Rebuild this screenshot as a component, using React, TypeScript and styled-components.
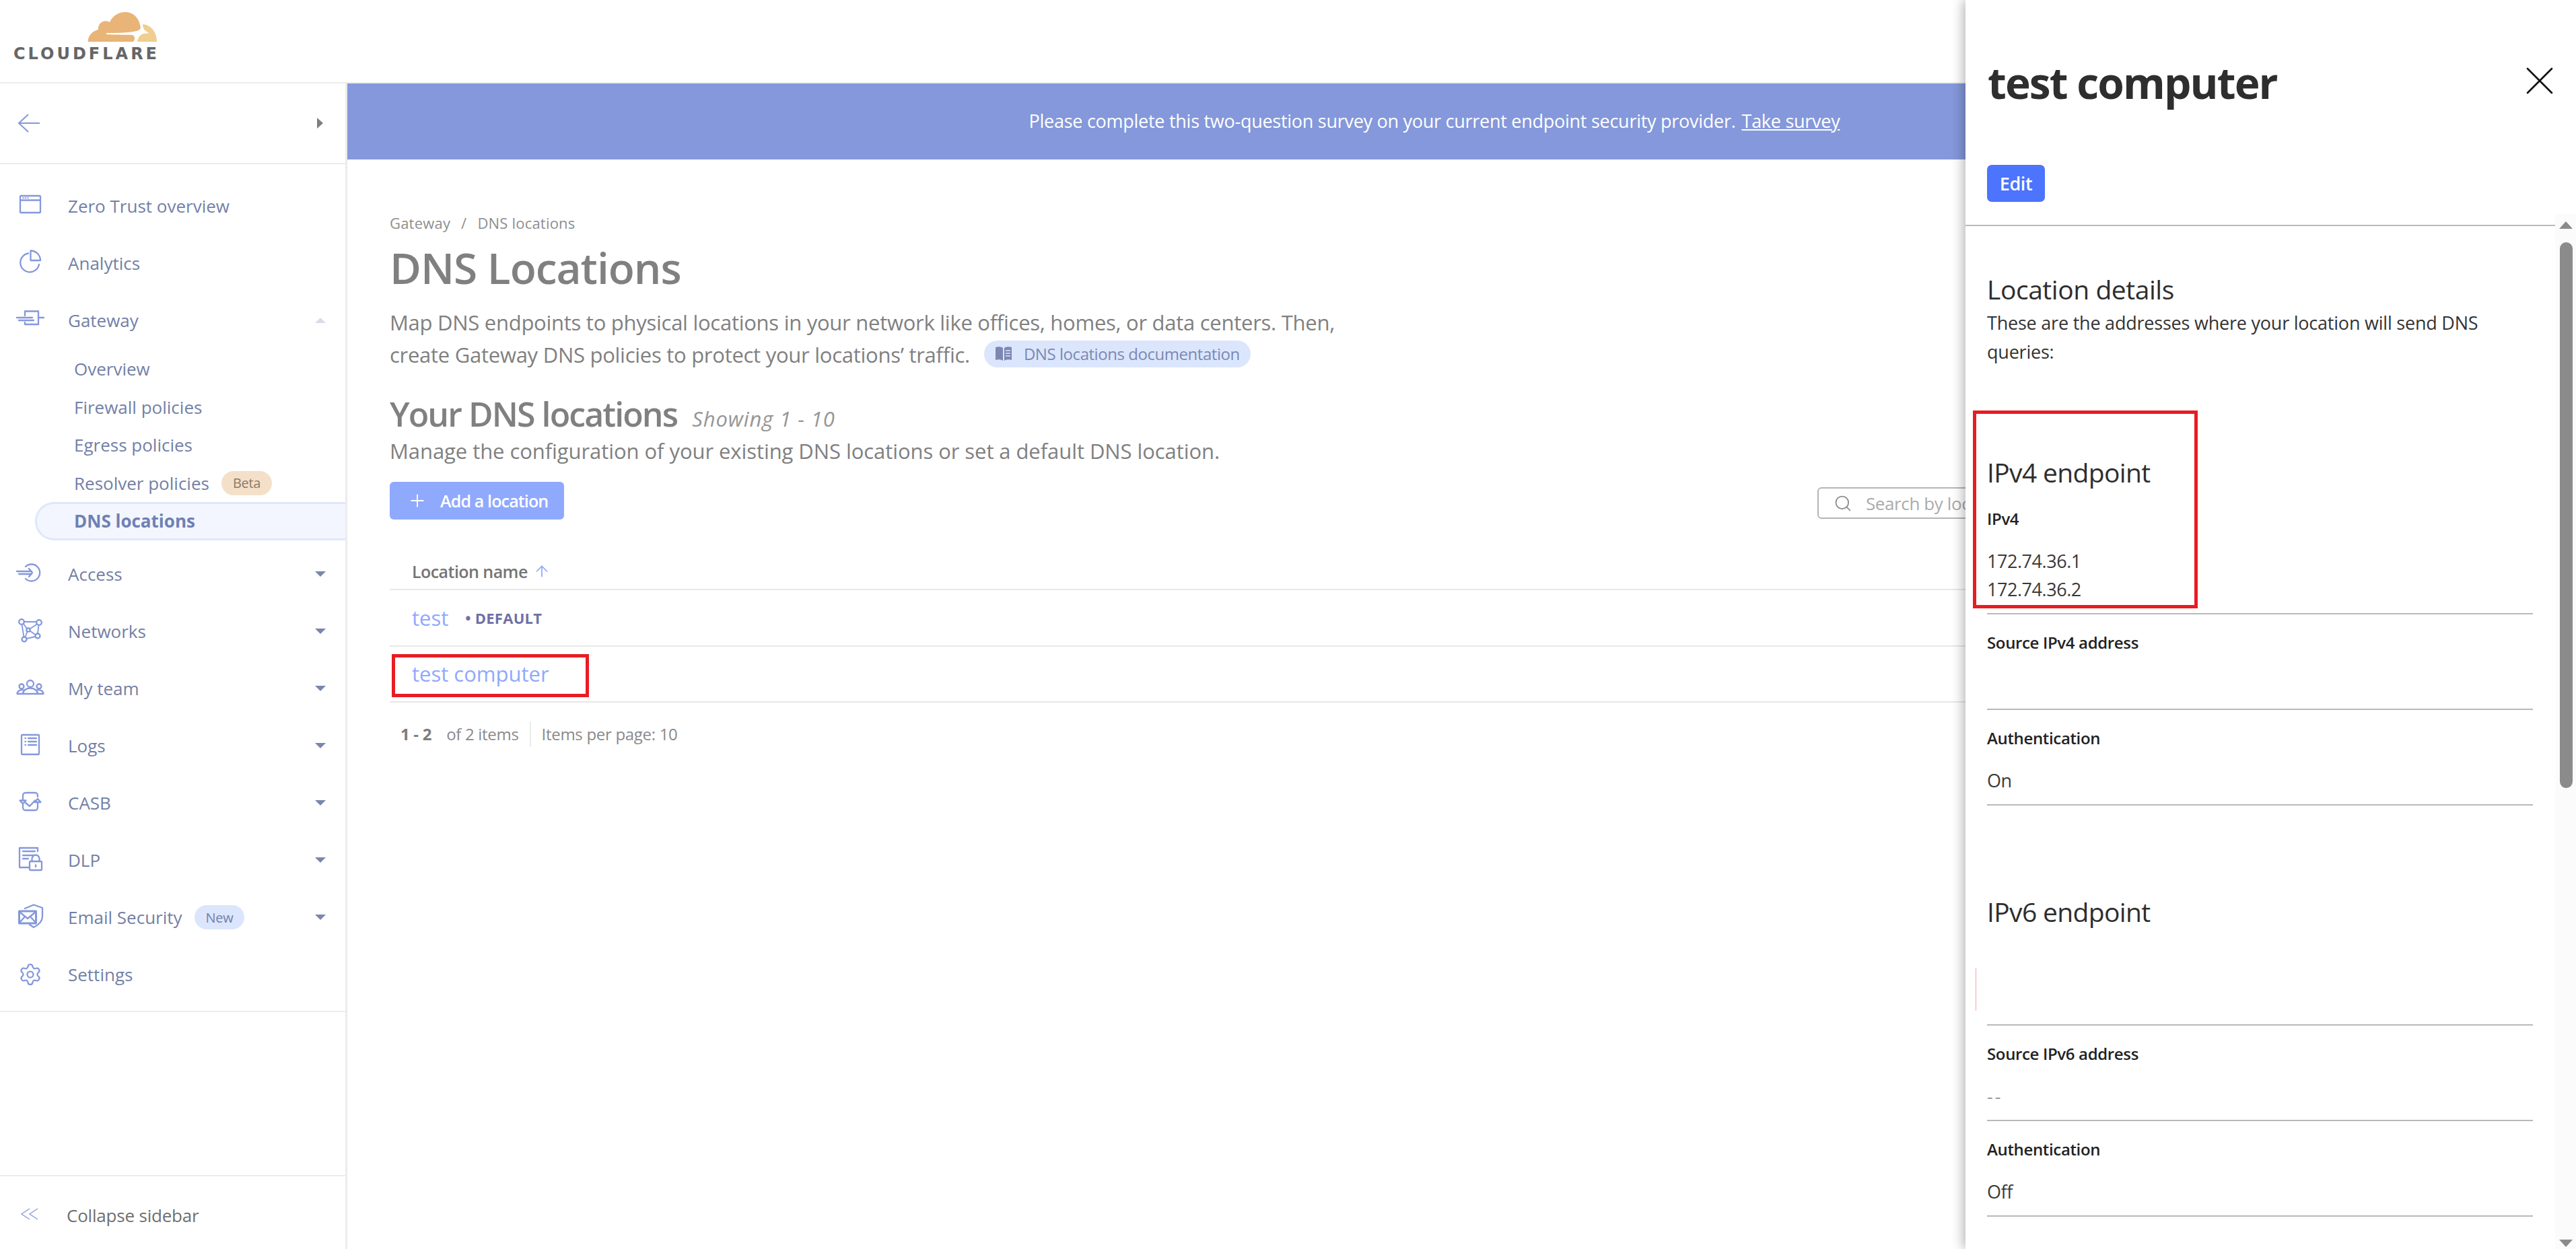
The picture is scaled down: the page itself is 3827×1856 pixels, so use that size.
import React from 'react';
import styled, { createGlobalStyle } from 'styled-components';
import { ArrowUp, Plus, Search, Settings, X } from 'lucide-react';

const GlobalStyle = createGlobalStyle`
    html, body {
        margin: 0;
        padding: 0;
        background: #fff;
        font-family: 'Open Sans', 'Noto Sans', sans-serif;
    }
    * {
        box-sizing: border-box;
    }
`;

const Page = styled.div`
    position: relative;
    width: 3827px;
    height: 1856px;
    overflow: hidden;
    display: flex;
    flex-direction: column;
    background: #fff;
`;

const TopBar = styled.header`
    height: 124px;
    flex: none;
    border-bottom: 2px solid #ececec;
    padding: 15px 0 0 20px;
`;

const LogoWrap = styled.div`
    display: flex;
    flex-direction: column;
    align-items: flex-end;
    width: 214px;
`;

const LogoText = styled.div`
    font-family: 'DejaVu Sans', sans-serif;
    font-weight: 700;
    font-size: 24px;
    line-height: 20px;
    letter-spacing: 4px;
    margin-top: 7px;
    width: 214px;
    white-space: nowrap;
    color: #666667;
`;

const Body = styled.div`
    flex: 1;
    display: flex;
    min-height: 0;
`;

const Sidebar = styled.aside`
    width: 516px;
    flex: none;
    display: flex;
    flex-direction: column;
    border-right: 3px solid #ececec;
`;

const BackRow = styled.div`
    height: 120px;
    flex: none;
    display: flex;
    align-items: center;
    justify-content: space-between;
    padding: 0 33px 0 26px;
    border-bottom: 2px solid #ececec;
`;

const SideTriangle = styled.span`
    width: 0;
    height: 0;
    border-top: 8px solid transparent;
    border-bottom: 8px solid transparent;
    border-left: 9px solid #7f7f7f;
`;

const Nav = styled.nav`
    padding: 19px 0 11px;
    border-bottom: 2px solid #ececec;
`;

const NavRow = styled.div`
    height: 85px;
    display: flex;
    align-items: center;
    padding: 0 29px 0 23px;
`;

const IconSlot = styled.span`
    width: 44px;
    height: 44px;
    flex: none;
    display: flex;
    align-items: center;
    justify-content: center;
    margin-right: 34px;
    color: #8498db;
`;

const NavLabel = styled.span`
    font-size: 26px;
    letter-spacing: 0;
    color: #737fa6;
    white-space: nowrap;
`;

const Caret = styled.span<{ $open?: boolean }>`
    width: 0;
    height: 0;
    margin-left: auto;
    border-left: 8.5px solid transparent;
    border-right: 8.5px solid transparent;
    ${({ $open }) =>
        $open ? 'border-bottom: 8px solid #d8dde9;' : 'border-top: 8px solid #7a86ad;'}
`;

const SubList = styled.div`
    padding: 2px 0 8px;
`;

const SubRow = styled.div<{ $active?: boolean }>`
    height: 56.5px;
    display: flex;
    align-items: center;
    padding-left: 110px;
    font-size: 26px;
    letter-spacing: 0;
    white-space: nowrap;
    color: #737fa6;
    ${({ $active }) =>
        $active &&
        `
        margin-left: 52px;
        padding-left: 55px;
        font-weight: 700;
        color: #6f80b3;
        background: #f3f6fe;
        border: 3px solid #dfe7fb;
        border-right: none;
        border-radius: 28px 0 0 28px;
    `}
`;

const Tag = styled.span<{ $bg: string; $fg: string }>`
    height: 36px;
    padding: 0 17px;
    margin-left: 18px;
    border-radius: 18px;
    display: inline-flex;
    align-items: center;
    font-size: 20px;
    letter-spacing: -0.3px;
    background: ${({ $bg }) => $bg};
    color: ${({ $fg }) => $fg};
`;

const NavFooter = styled.div`
    margin-top: auto;
    height: 110px;
    flex: none;
    border-top: 2px solid #ececec;
    display: flex;
    align-items: center;
    padding: 8px 0 0 23px;
    color: #8f9fdf;
`;

const FooterLabel = styled.span`
    font-size: 26px;
    letter-spacing: -0.2px;
    color: #6f6f6f;
    margin-left: 32px;
`;

const Main = styled.main`
    flex: 1;
    min-width: 0;
    display: flex;
    flex-direction: column;
`;

const Banner = styled.div`
    height: 113px;
    flex: none;
    display: flex;
    align-items: center;
    justify-content: center;
    padding: 0 81px 3px 0;
    background: #8498db;
    color: #fff;
    font-size: 27px;
    letter-spacing: -0.27px;
    white-space: nowrap;
    a {
        color: #fff;
        text-decoration: underline;
        margin-left: 9px;
    }
`;

const Content = styled.div`
    padding: 79px 427px 0 63px;
`;

const Crumbs = styled.div`
    display: flex;
    font-size: 22px;
    line-height: 30px;
    letter-spacing: 0.2px;
    color: #8e8e8e;
`;

const CrumbSep = styled.span`
    margin: 0 16px;
`;

const Title = styled.h1`
    margin: 14px 0 0;
    font-size: 64px;
    line-height: 76px;
    font-weight: 600;
    letter-spacing: -1px;
    color: #808080;
`;

const Lead = styled.p`
    margin: 19px 0 0;
    font-size: 31px;
    line-height: 48px;
    letter-spacing: -0.27px;
    color: #808080;
    white-space: nowrap;
`;

const DocPill = styled.span`
    display: inline-flex;
    align-items: center;
    vertical-align: 1px;
    height: 40px;
    padding: 0 16px;
    margin-left: 21px;
    border-radius: 20px;
    background: #dbe6fd;
    color: #7c88b2;
    font-size: 24px;
    letter-spacing: -0.45px;
    svg {
        margin-right: 17px;
    }
`;

const SectionTitle = styled.div`
    margin-top: 36px;
    display: flex;
    align-items: baseline;
    height: 56px;
`;

const SectionName = styled.h2`
    margin: 0;
    font-size: 50px;
    line-height: 56px;
    font-weight: 600;
    letter-spacing: -1.9px;
    color: #808080;
`;

const Showing = styled.span`
    margin-left: 22px;
    font-size: 31px;
    font-style: italic;
    letter-spacing: 0.9px;
    color: #969696;
`;

const SubLead = styled.p`
    margin: 5px 0 0;
    font-size: 31px;
    line-height: 44px;
    letter-spacing: -0.07px;
    color: #808080;
`;

const Toolbar = styled.div`
    margin-top: 24px;
    display: flex;
    align-items: flex-start;
`;

const AddButton = styled.div`
    width: 259px;
    height: 56px;
    border-radius: 6px;
    background: #8fa9fd;
    color: #fff;
    display: flex;
    align-items: center;
    padding-left: 26px;
    gap: 19px;
    font-size: 25px;
    font-weight: 600;
    letter-spacing: -0.85px;
    white-space: nowrap;
`;

const SearchBox = styled.div`
    margin: 8px 0 0 auto;
    width: 700px;
    height: 47px;
    border: 2px solid #b5b5b5;
    border-radius: 6px;
    display: flex;
    align-items: center;
    padding-left: 22px;
    gap: 20px;
    font-size: 26px;
    letter-spacing: -0.4px;
    color: #ababab;
`;

// The drawer covers the rest of the placeholder, so it stops at the drawer's edge.
const SearchText = styled.span`
    width: 148px;
    overflow: hidden;
    white-space: nowrap;
`;

const TableHead = styled.div`
    margin-top: 51px;
    height: 54px;
    padding-left: 33px;
    display: flex;
    align-items: center;
    gap: 8px;
    border-bottom: 2px solid #e7e7e7;
    font-size: 25px;
    font-weight: 600;
    letter-spacing: -0.55px;
    color: #757575;
    svg {
        color: #8fa9fd;
    }
`;

const TableRow = styled.div`
    position: relative;
    height: 83.5px;
    padding-left: 33px;
    display: flex;
    align-items: center;
    border-bottom: 2px solid #e7e7e7;
`;

const RowLink = styled.span`
    font-size: 31px;
    font-weight: 500;
    letter-spacing: 0;
    color: #8fa9fd;
`;

const DefaultMark = styled.span`
    margin-left: 25px;
    font-size: 22px;
    font-weight: 700;
    letter-spacing: 0.25px;
    color: #6f70a6;
`;

const RedFrame = styled.div<{ $left: number; $top: number; $w: number; $h: number }>`
    position: absolute;
    left: ${({ $left }) => $left}px;
    top: ${({ $top }) => $top}px;
    width: ${({ $w }) => $w}px;
    height: ${({ $h }) => $h}px;
    border: 5px solid #e81c24;
    pointer-events: none;
`;

const Pager = styled.div`
    margin-top: 23px;
    height: 47px;
    padding-left: 16px;
    display: flex;
    align-items: center;
    font-size: 24px;
    letter-spacing: -0.3px;
    color: #8a8a8a;
    strong {
        font-weight: 700;
        margin-right: 22px;
        color: #7c7c7c;
    }
`;

const PagerRule = styled.span`
    height: 38px;
    margin: 0 16px;
    border-left: 2px solid #ececec;
`;

const Panel = styled.aside`
    position: absolute;
    top: 0;
    right: 0;
    bottom: 0;
    width: 907px;
    background: #fff;
    box-shadow: -4px 0 16px rgba(0, 0, 0, 0.28);
    display: flex;
    flex-direction: column;
`;

const PanelHead = styled.div`
    position: relative;
    height: 336px;
    flex: none;
    margin-right: 31px;
    padding: 77px 0 0 33px;
    border-bottom: 2px solid #b9b9b9;
`;

const PanelTitle = styled.h2`
    margin: 0;
    font-size: 64px;
    line-height: 92px;
    font-weight: 700;
    letter-spacing: -1.9px;
    color: #2e2e2e;
`;

const CloseIcon = styled.span`
    position: absolute;
    top: 84px;
    right: -13px;
    color: #111;
    display: flex;
`;

const EditButton = styled.div`
    width: 86px;
    height: 55px;
    margin: 76px 0 0 -1px;
    border-radius: 7px;
    background: #4c74fd;
    color: #fff;
    display: flex;
    align-items: center;
    justify-content: center;
    font-size: 27px;
    font-weight: 600;
    letter-spacing: -0.4px;
`;

const PanelBody = styled.div`
    flex: 1;
    min-height: 0;
    overflow: hidden;
    width: 843px;
    padding-left: 32px;
`;

const DetailsTitle = styled.h3`
    margin: 69px 0 0;
    font-size: 39px;
    line-height: 50px;
    font-weight: 500;
    letter-spacing: -0.45px;
    color: #2e2e2e;
`;

const DetailsText = styled.p`
    margin: 3px 0 0;
    width: 760px;
    font-size: 27px;
    line-height: 43px;
    letter-spacing: -0.22px;
    color: #333;
`;

const Endpoint = styled.section<{ $gap: number }>`
    position: relative;
    margin-top: ${({ $gap }) => $gap}px;
`;

const EndpointTitle = styled.h3`
    margin: 0 0 2px;
    font-size: 39px;
    line-height: 50px;
    font-weight: 500;
    letter-spacing: -0.65px;
    color: #2e2e2e;
`;

const Field = styled.div`
    position: relative;
    padding: 27px 0 14px;
    border-bottom: 2px solid #b9b9b9;
`;

const FieldLabel = styled.div`
    min-height: 30px;
    font-size: 24px;
    line-height: 30px;
    font-weight: 600;
    letter-spacing: -0.35px;
    color: #222;
`;

const FieldValue = styled.div`
    min-height: 42px;
    margin-top: 27px;
    font-size: 27px;
    line-height: 42px;
    letter-spacing: -0.45px;
    color: #3a3a3a;
`;

const EmptyValue = styled(FieldValue)`
    letter-spacing: 3px;
    color: #999;
`;

const Caretline = styled.span`
    position: absolute;
    left: -17px;
    top: 57px;
    height: 63px;
    border-left: 1px solid #f6a3ab;
`;

const ScrollTrack = styled.div`
    position: absolute;
    top: 318px;
    right: 0;
    bottom: 0;
    width: 31px;
    background: #fbfbfb;
`;

const ScrollThumb = styled.div`
    position: absolute;
    top: 42px;
    left: 7px;
    width: 19px;
    height: 811px;
    border-radius: 10px;
    background: #8b8b8b;
`;

const ScrollArrow = styled.span<{ $down?: boolean }>`
    position: absolute;
    left: 6px;
    width: 0;
    height: 0;
    border-left: 10.5px solid transparent;
    border-right: 10.5px solid transparent;
    ${({ $down }) =>
        $down
            ? 'bottom: 3px; border-top: 11px solid #8b8b8b;'
            : 'top: 11px; border-bottom: 11px solid #8b8b8b;'}
`;

const Glyph: React.FC<{ children: React.ReactNode }> = ({ children }) => (
    <svg width="44" height="44" viewBox="0 0 44 44" fill="none" stroke="currentColor" strokeWidth="2.3" strokeLinecap="round" strokeLinejoin="round">
        {children}
    </svg>
);

const ICONS: Record<string, React.ReactNode> = {
    overview: (
        <Glyph>
            <rect x="7" y="7" width="30" height="25" rx="1.5" />
            <path d="M7 13.5H37" />
            <path d="M11 10.2h.8M14.5 10.2h.8M18 10.2h.8" strokeWidth="1.8" />
        </Glyph>
    ),
    analytics: (
        <Glyph>
            <path d="M19 7.5A14 14 0 1 0 35 24" />
            <path d="M22.5 3.5V18H37A14.5 14.5 0 0 0 22.5 3.5Z" />
        </Glyph>
    ),
    gateway: (
        <Glyph>
            <path d="M14 15V8.500H34V28H14V25" />
            <path d="M2 18H25M5 22H27M34 18H42" />
        </Glyph>
    ),
    access: (
        <Glyph>
            <path d="M15 11A12.500 12.500 0 1 1 15 29" />
            <path d="M2 18H24M5 22H24M20 14L25 20L20 26" />
        </Glyph>
    ),
    networks: (
        <Glyph>
            <circle cx="9" cy="8" r="3.800" />
            <circle cx="35" cy="9" r="3.800" />
            <circle cx="33" cy="29" r="3.500" />
            <circle cx="13" cy="34" r="3.500" />
            <circle cx="19" cy="20" r="2.700" />
            <path d="M13 8H31M34.500 13L33 25.500M29.500 30L16.500 33M12.500 30.500L9.500 12M11.500 10.500L17 18M21.500 18.500L32 11.500M21.500 21.500L30 27.500M17.500 22.500L14.500 31" strokeWidth="1.800" />
        </Glyph>
    ),
    team: (
        <Glyph>
            <circle cx="22" cy="15" r="5" />
            <circle cx="9" cy="19" r="3.500" />
            <circle cx="35" cy="19" r="3.500" />
            <path d="M3 30H41M11 30A11 8.500 0 0 1 33 30M2.500 30A7 6 0 0 1 13 25M41.500 30A7 6 0 0 0 31 25" />
        </Glyph>
    ),
    logs: (
        <Glyph>
            <rect x="9" y="6" width="26" height="29" rx="1" />
            <path d="M19 11H31M19 16H31M19 21H31M14.500 11h.5M14.500 16h.5M14.500 21h.5" />
        </Glyph>
    ),
    casb: (
        <Glyph>
            <path d="M11 18V11A4 4 0 0 1 15 7H29A4 4 0 0 1 33 11V13M33 21V29A4 4 0 0 1 29 33H15A4 4 0 0 1 11 29V25" />
            <path d="M6.500 18.500H15.500L11 23.500ZM28.500 21L33 16L37.500 21Z" />
            <path d="M15 22L21 27L29 18.500" />
        </Glyph>
    ),
    dlp: (
        <Glyph>
            <path d="M20 33H6V4H33V9" />
            <path d="M11 9H29M11 15H27M11 20H19" />
            <rect x="21" y="24" width="18" height="13" rx="1" />
            <path d="M24.500 24V20A5.500 5.500 0 0 1 35.500 20V24M30 29.500V32" />
        </Glyph>
    ),
    email: (
        <Glyph>
            <path d="M14 9L27 3.500L40 8V21C40 29 33 34 27 37L21 33" />
            <rect x="5.500" y="13" width="25" height="18" fill="#fff" strokeWidth="3" />
            <path d="M6 14L18 24L30 14M6 30L14 21M30 30L22 21" />
        </Glyph>
    ),
};

const Cloud = () => (
    <svg width="104" height="48" viewBox="0 0 104 48">
        <path
            fill="#e8b478"
            d="M0.500 47C1 37 8 31 16 29C15 20 24 13 33 18C37 8 48 2 58 3C70 4 78 14 79 27L76 30C66 34 45 34 28 34L28 36C45 37 60 36.500 66 37C71 38 71 43 68 47Z"
        />
        <path
            fill="#f0ce90"
            d="M82 21C95 22 103 33 103 47H74C75 41 78 36 84 35L92 34C86 32 82 28 82 21Z"
        />
    </svg>
);

const BackArrow = () => (
    <svg width="34" height="30" viewBox="0 0 34 30" fill="none" stroke="#8498db" strokeWidth="2">
        <path d="M33 15H2M16 2L2 15L16 28" />
    </svg>
);

const Chevrons = () => (
    <svg width="44" height="44" viewBox="0 0 44 44" fill="none" stroke="currentColor" strokeWidth="1.500">
        <path d="M21 12L9 20L21 28M33 12L21 20L33 28" />
    </svg>
);

const Book = () => (
    <svg width="26" height="24" viewBox="0 0 26 24">
        <path fill="#7c88b2" d="M1 2C5 0.500 9 1 12 3V22C9 20 5 19.500 1 21ZM25 2C21 0.500 17 1 14 3V22C17 20 21 19.500 25 21Z" />
        <path stroke="#dbe6fd" strokeWidth="1.500" d="M16 7H23M16 11H23M16 15H23" />
    </svg>
);

const GROUPS = [
    { key: 'access', label: 'Access' },
    { key: 'networks', label: 'Networks' },
    { key: 'team', label: 'My team' },
    { key: 'logs', label: 'Logs' },
    { key: 'casb', label: 'CASB' },
    { key: 'dlp', label: 'DLP' },
];

const App: React.FC = () => (
    <Page>
        <GlobalStyle />
        <TopBar>
            <LogoWrap>
                <Cloud />
                <LogoText>CLOUDFLARE</LogoText>
            </LogoWrap>
        </TopBar>
        <Body>
            <Sidebar>
                <BackRow>
                    <BackArrow />
                    <SideTriangle />
                </BackRow>
                <Nav>
                    <NavRow>
                        <IconSlot>{ICONS.overview}</IconSlot>
                        <NavLabel>Zero Trust overview</NavLabel>
                    </NavRow>
                    <NavRow>
                        <IconSlot>{ICONS.analytics}</IconSlot>
                        <NavLabel>Analytics</NavLabel>
                    </NavRow>
                    <NavRow>
                        <IconSlot>{ICONS.gateway}</IconSlot>
                        <NavLabel>Gateway</NavLabel>
                        <Caret $open />
                    </NavRow>
                    <SubList>
                        <SubRow>Overview</SubRow>
                        <SubRow>Firewall policies</SubRow>
                        <SubRow>Egress policies</SubRow>
                        <SubRow>
                            Resolver policies
                            <Tag $bg="#f4e0c9" $fg="#8a7a68">Beta</Tag>
                        </SubRow>
                        <SubRow $active>DNS locations</SubRow>
                    </SubList>
                    {GROUPS.map((group) => (
                        <NavRow key={group.key}>
                            <IconSlot>{ICONS[group.key]}</IconSlot>
                            <NavLabel>{group.label}</NavLabel>
                            <Caret />
                        </NavRow>
                    ))}
                    <NavRow>
                        <IconSlot>{ICONS.email}</IconSlot>
                        <NavLabel>Email Security</NavLabel>
                        <Tag $bg="#dbe6fd" $fg="#737fa6">New</Tag>
                        <Caret />
                    </NavRow>
                    <NavRow>
                        <IconSlot><Settings size={36} strokeWidth={1.5} /></IconSlot>
                        <NavLabel>Settings</NavLabel>
                    </NavRow>
                </Nav>
                <NavFooter>
                    <Chevrons />
                    <FooterLabel>Collapse sidebar</FooterLabel>
                </NavFooter>
            </Sidebar>
            <Main>
                <Banner>
                    Please complete this two-question survey on your current endpoint security provider.
                    <a>Take survey</a>
                </Banner>
                <Content>
                    <Crumbs>
                        <span>Gateway</span>
                        <CrumbSep>/</CrumbSep>
                        <span>DNS locations</span>
                    </Crumbs>
                    <Title>DNS Locations</Title>
                    <Lead>
                        Map DNS endpoints to physical locations in your network like offices, homes, or data centers. Then,
                        <br />
                        create Gateway DNS policies to protect your locations’ traffic.
                        <DocPill><Book />DNS locations documentation</DocPill>
                    </Lead>
                    <SectionTitle>
                        <SectionName>Your DNS locations</SectionName>
                        <Showing>Showing 1 - 10</Showing>
                    </SectionTitle>
                    <SubLead>Manage the configuration of your existing DNS locations or set a default DNS location.</SubLead>
                    <Toolbar>
                        <AddButton><Plus size={30} strokeWidth={1.5} />Add a location</AddButton>
                        <SearchBox>
                            <Search size={28} strokeWidth={1.5} color="#8a8a8a" />
                            <SearchText>Search by location</SearchText>
                        </SearchBox>
                    </Toolbar>
                    <TableHead>Location name <ArrowUp size={26} strokeWidth={1.6} /></TableHead>
                    <TableRow>
                        <RowLink>test</RowLink>
                        <DefaultMark>• DEFAULT</DefaultMark>
                    </TableRow>
                    <TableRow>
                        <RowLink>test computer</RowLink>
                        <RedFrame $left={3} $top={11} $w={293} $h={64} />
                    </TableRow>
                    <Pager>
                        <strong>1 - 2</strong> of 2 items
                        <PagerRule />
                        Items per page: 10
                    </Pager>
                </Content>
            </Main>
        </Body>
        <Panel>
            <PanelHead>
                <PanelTitle>test computer</PanelTitle>
                <CloseIcon><X size={72} strokeWidth={0.9} /></CloseIcon>
                <EditButton>Edit</EditButton>
            </PanelHead>
            <PanelBody>
                <DetailsTitle>Location details</DetailsTitle>
                <DetailsText>These are the addresses where your location will send DNS queries:</DetailsText>
                <Endpoint $gap={133}>
                    <RedFrame $left={-21} $top={-67} $w={334} $h={294} />
                    <EndpointTitle>IPv4 endpoint</EndpointTitle>
                    <Field>
                        <FieldLabel>IPv4</FieldLabel>
                        <FieldValue>172.74.36.1<br />172.74.36.2</FieldValue>
                    </Field>
                    <Field>
                        <FieldLabel>Source IPv4 address</FieldLabel>
                        <FieldValue />
                    </Field>
                    <Field>
                        <FieldLabel>Authentication</FieldLabel>
                        <FieldValue>On</FieldValue>
                    </Field>
                </Endpoint>
                <Endpoint $gap={133}>
                    <EndpointTitle>IPv6 endpoint</EndpointTitle>
                    <Field>
                        <Caretline />
                        <FieldLabel />
                        <FieldValue />
                    </Field>
                    <Field>
                        <FieldLabel>Source IPv6 address</FieldLabel>
                        <EmptyValue>--</EmptyValue>
                    </Field>
                    <Field>
                        <FieldLabel>Authentication</FieldLabel>
                        <FieldValue>Off</FieldValue>
                    </Field>
                </Endpoint>
            </PanelBody>
            <ScrollTrack>
                <ScrollArrow />
                <ScrollThumb />
                <ScrollArrow $down />
            </ScrollTrack>
        </Panel>
    </Page>
);

export default App;
